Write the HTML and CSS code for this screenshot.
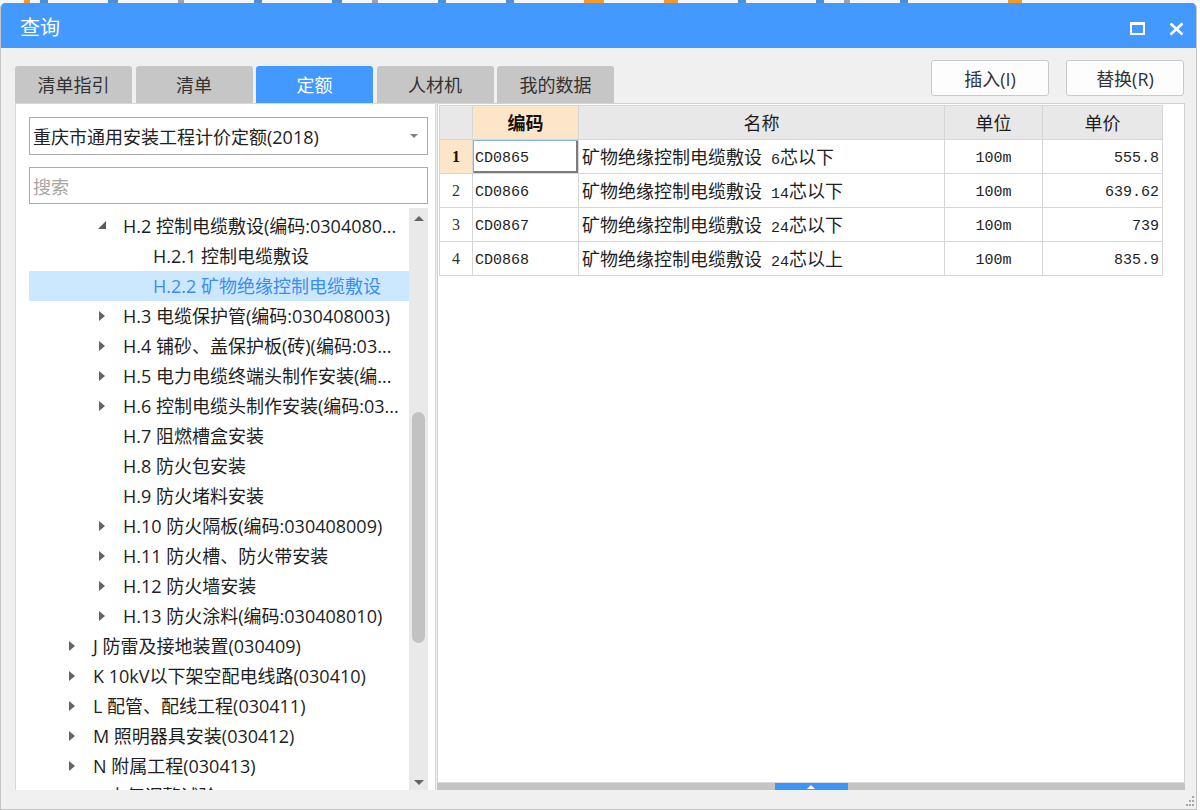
FILE: index.html
```html
<!DOCTYPE html>
<html lang="zh-CN">
<head>
<meta charset="utf-8">
<title>查询</title>
<link rel="stylesheet" href="styles.css">
</head>
<body>
<div class="backdrop">
  <span class="bit b-orange w6 m24"></span><span class="bit b-blue w8 m10"></span><span class="bit b-blue w10 m60"></span><span class="bit b-gray w6 m60"></span><span class="bit b-blue w8 m70"></span><span class="bit b-blue w10 m70"></span><span class="bit b-gray w6 m30"></span><span class="bit b-blue w8 m60"></span><span class="bit b-blue w8 m60"></span><span class="bit b-orange w20 m70"></span><span class="bit b-orange w14 m60"></span><span class="bit b-blue w8 m60"></span><span class="bit b-blue w8 m70"></span><span class="bit b-gray w6 m20"></span><span class="bit b-blue w8 m50"></span><span class="bit b-orange w14 m100"></span>
</div>
<div class="window">
  <div class="titlebar">
    <span class="title">查询</span>
    <div class="win-controls">
      <svg class="win-btn" width="15" height="13" viewBox="0 0 15 13"><rect x="1" y="1.5" width="13" height="10.5" fill="none" stroke="#fff" stroke-width="2"/><rect x="0" y="0" width="15" height="3" fill="#fff"/></svg>
      <svg class="win-btn" width="15" height="14" viewBox="0 0 15 14"><path d="M1.5 1.5L13.5 12.5M13.5 1.5L1.5 12.5" stroke="#fff" stroke-width="2.6" fill="none"/></svg>
    </div>
  </div>
  <div class="content">
    <div class="toolbar">
      <div class="tabs">
        <div class="tab">清单指引</div>
        <div class="tab">清单</div>
        <div class="tab active">定额</div>
        <div class="tab">人材机</div>
        <div class="tab">我的数据</div>
      </div>
      <div class="actions">
        <button class="btn">插入(I)</button>
        <button class="btn">替换(R)</button>
      </div>
    </div>
    <div class="main">
      <div class="left-panel">
        <div class="select">重庆市通用安装工程计价定额(2018)<span class="caret"></span></div>
        <div class="search">搜索</div>
        <div class="tree-wrap">
          <ul class="tree">
            <li class="node lvl2"><span class="arrow open"></span>H.2 控制电缆敷设(编码:0304080...</li>
            <li class="node lvl3"><span class="arrow none"></span>H.2.1 控制电缆敷设</li>
            <li class="node lvl3 selected"><span class="arrow none"></span>H.2.2 矿物绝缘控制电缆敷设</li>
            <li class="node lvl2"><span class="arrow closed"></span>H.3 电缆保护管(编码:030408003)</li>
            <li class="node lvl2"><span class="arrow closed"></span>H.4 铺砂、盖保护板(砖)(编码:03...</li>
            <li class="node lvl2"><span class="arrow closed"></span>H.5 电力电缆终端头制作安装(编...</li>
            <li class="node lvl2"><span class="arrow closed"></span>H.6 控制电缆头制作安装(编码:03...</li>
            <li class="node lvl2"><span class="arrow none"></span>H.7 阻燃槽盒安装</li>
            <li class="node lvl2"><span class="arrow none"></span>H.8 防火包安装</li>
            <li class="node lvl2"><span class="arrow none"></span>H.9 防火堵料安装</li>
            <li class="node lvl2"><span class="arrow closed"></span>H.10 防火隔板(编码:030408009)</li>
            <li class="node lvl2"><span class="arrow closed"></span>H.11 防火槽、防火带安装</li>
            <li class="node lvl2"><span class="arrow closed"></span>H.12 防火墙安装</li>
            <li class="node lvl2"><span class="arrow closed"></span>H.13 防火涂料(编码:030408010)</li>
            <li class="node lvl1"><span class="arrow closed"></span>J 防雷及接地装置(030409)</li>
            <li class="node lvl1"><span class="arrow closed"></span>K 10kV以下架空配电线路(030410)</li>
            <li class="node lvl1"><span class="arrow closed"></span>L 配管、配线工程(030411)</li>
            <li class="node lvl1"><span class="arrow closed"></span>M 照明器具安装(030412)</li>
            <li class="node lvl1"><span class="arrow closed"></span>N 附属工程(030413)</li>
            <li class="node lvl1"><span class="arrow closed"></span>P 电气调整试验(030414)</li>
          </ul>
          <div class="vscroll">
            <div class="vs-btn"><span class="tri-up"></span></div>
            <div class="vs-thumb"></div>
            <div class="vs-fill"></div>
            <div class="vs-btn bottom"><span class="tri-down"></span></div>
          </div>
        </div>
      </div>
      <div class="right-col">
        <div class="grid-panel">
          <table class="grid">
            <colgroup>
              <col class="c-no"><col class="c-code"><col class="c-name"><col class="c-unit"><col class="c-price">
            </colgroup>
            <thead>
              <tr><th></th><th class="cur">编码</th><th>名称</th><th>单位</th><th>单价</th></tr>
            </thead>
            <tbody>
              <tr><td class="no cur">1</td><td class="code focus">CD0865</td><td class="name">矿物绝缘控制电缆敷设<span class="mono"> 6</span>芯以下</td><td class="unit">100m</td><td class="price">555.8</td></tr>
              <tr><td class="no">2</td><td class="code">CD0866</td><td class="name">矿物绝缘控制电缆敷设<span class="mono"> 14</span>芯以下</td><td class="unit">100m</td><td class="price">639.62</td></tr>
              <tr><td class="no">3</td><td class="code">CD0867</td><td class="name">矿物绝缘控制电缆敷设<span class="mono"> 24</span>芯以下</td><td class="unit">100m</td><td class="price">739</td></tr>
              <tr><td class="no">4</td><td class="code">CD0868</td><td class="name">矿物绝缘控制电缆敷设<span class="mono"> 24</span>芯以上</td><td class="unit">100m</td><td class="price">835.9</td></tr>
            </tbody>
          </table>
        </div>
        <div class="splitter"><div class="split-handle"><span class="tri-up white"></span></div></div>
      </div>
    </div>
    <div class="status">
      <svg class="grip" width="8" height="11" viewBox="0 0 8 11"><g fill="#a8a8a8"><rect x="6" y="0" width="2" height="2"/><rect x="3" y="4" width="2" height="2"/><rect x="6" y="4" width="2" height="2"/><rect x="0" y="8" width="2" height="2"/><rect x="3" y="8" width="2" height="2"/><rect x="6" y="8" width="2" height="2"/></g></svg>
    </div>
  </div>
</div>
</body>
</html>
```

FILE: styles.css
```css
* { box-sizing: border-box; }
html, body { margin: 0; padding: 0; }
body {
  width: 1200px;
  height: 810px;
  overflow: hidden;
  background: #ffffff;
  font-family: "Open Sans", "Noto Sans CJK SC", sans-serif;
  color: #222;
}

/* strip of the desktop visible above the dialog */
.backdrop { height: 3px; display: flex; background: #f4f6f8; }
.bit { height: 3px; display: block; }
.b-orange { background: #f39a2b; }
.b-blue { background: #4f8fd8; }
.b-gray { background: #9aa4b0; }
.w6 { width: 6px; } .w8 { width: 8px; } .w10 { width: 10px; } .w14 { width: 14px; } .w20 { width: 20px; }
.m10 { margin-left: 10px; } .m20 { margin-left: 20px; } .m24 { margin-left: 24px; } .m30 { margin-left: 30px; }
.m50 { margin-left: 50px; } .m60 { margin-left: 60px; } .m70 { margin-left: 70px; } .m100 { margin-left: 100px; }

.window {
  width: 1197px;
  height: 807px;
  display: flex;
  flex-direction: column;
  background: #f0f0f0;
  border-left: 1px solid #c4c4c4;
  border-right: 1px solid #c4c4c4;
  border-bottom: 1px solid #c4c4c4;
  border-radius: 5px 5px 0 0;
  overflow: hidden;
}

.titlebar {
  height: 45px;
  flex: none;
  background: #4499fe;
  display: flex;
  align-items: center;
  padding: 0 12px 0 19px;
}
.title {
  font-family: "Noto Sans CJK SC", sans-serif;
  font-size: 20px;
  color: #fff;
  line-height: 1;
  margin-top: 3px;
}
.win-controls {
  margin-left: auto;
  display: flex;
  align-items: center;
  gap: 24px;
  margin-top: 6px;
}
.win-btn { display: block; }

.content {
  flex: 1;
  display: flex;
  flex-direction: column;
  padding: 12px 11px 0 14px;
  min-height: 0;
}

.toolbar {
  height: 43px;
  flex: none;
  display: flex;
  justify-content: space-between;
}
.tabs {
  align-self: flex-end;
  display: flex;
  gap: 3.5px;
}
.tab {
  width: 117px;
  height: 37px;
  background: #c6c6c6;
  border-radius: 3px 3px 0 0;
  display: flex;
  align-items: center;
  justify-content: center;
  font-size: 18px;
  color: #333;
  padding-bottom: 2px;
}
.tab.active { background: #4399fd; color: #fff; }

.actions { display: flex; gap: 17px; align-self: flex-start; margin-right: 1px; }
.btn {
  width: 118px;
  height: 36px;
  border: 1px solid #c9c9c9;
  border-radius: 3px;
  background: #fdfdfd;
  font-family: "Open Sans", "Noto Sans CJK SC", sans-serif;
  font-size: 18px;
  color: #333;
  padding: 0;
}

.main {
  height: 687px;
  flex: none;
  display: flex;
  gap: 1px;
}

/* left panel */
.left-panel {
  width: 421px;
  background: #fff;
  border: 1px solid #d8d8d8;
  border-bottom: none;
  padding: 13px 7px 0 13px;
  display: flex;
  flex-direction: column;
  min-height: 0;
}
.select, .search {
  height: 38px;
  flex: none;
  border: 1px solid #ababab;
  display: flex;
  align-items: center;
  padding-left: 3px;
  font-size: 18px;
  white-space: nowrap;
}
.select { color: #222; }
.caret {
  margin-left: auto;
  margin-right: 9px;
  width: 0;
  height: 0;
  border-left: 4px solid transparent;
  border-right: 4px solid transparent;
  border-top: 4px solid #808080;
}
.search { margin-top: 12px; height: 37px; color: #a6a6a6; }

.tree-wrap {
  margin-top: 4px;
  flex: 1;
  min-height: 0;
  display: flex;
}
.tree {
  list-style: none;
  margin: 0;
  padding: 3px 0 0 0;
  flex: 1;
  min-width: 0;
  overflow: hidden;
}
.node {
  height: 30px;
  display: flex;
  align-items: center;
  white-space: nowrap;
  overflow: hidden;
  font-size: 18px;
  color: #1e1e1e;
  padding-bottom: 3px;
}
.node.lvl1 { padding-left: 39px; }
.node.lvl2 { padding-left: 69px; }
.node.lvl3 { padding-left: 99px; }
.node.selected { background: #cce8ff; color: #3d8cf0; }
.arrow {
  flex: none;
  width: 25px;
  height: 12px;
  position: relative;
  top: 1px;
}
.arrow.closed::before {
  content: "";
  position: absolute;
  left: 1px;
  top: 1px;
  border-top: 5px solid transparent;
  border-bottom: 5px solid transparent;
  border-left: 6px solid #636363;
}
.arrow.open::before {
  content: "";
  position: absolute;
  left: 0;
  top: 1px;
  border-left: 8px solid transparent;
  border-bottom: 8px solid #5a5a5a;
}

.vscroll {
  width: 19px;
  flex: none;
  background: #e9e9e9;
  display: flex;
  flex-direction: column;
  align-items: center;
}
.vs-btn {
  height: 20px;
  width: 100%;
  flex: none;
  display: flex;
  align-items: center;
  justify-content: center;
}
.vs-btn.bottom { height: 16px; }
.tri-up {
  width: 0; height: 0;
  border-left: 5px solid transparent;
  border-right: 5px solid transparent;
  border-bottom: 5px solid #646464;
}
.tri-down {
  width: 0; height: 0;
  border-left: 5px solid transparent;
  border-right: 5px solid transparent;
  border-top: 5px solid #646464;
}
.vs-thumb {
  width: 13px;
  height: 231px;
  margin-top: 184px;
  flex: none;
  border-radius: 7px;
  background: #c2c2c2;
}
.vs-fill { flex: 1; }

/* right side */
.right-col {
  width: 748px;
  display: flex;
  flex-direction: column;
}
.grid-panel {
  flex: 1;
  background: #fff;
  border: 1px solid #d2d2d2;
  border-bottom: none;
  padding: 1px 0 0 1px;
}
.grid {
  border-collapse: collapse;
  table-layout: fixed;
  width: 723px;
  font-family: "Open Sans", "Noto Sans CJK SC", sans-serif;
  font-size: 18px;
  color: #1e1e1e;
}
.c-no { width: 33px; }
.c-code { width: 106px; }
.c-name { width: 366px; }
.c-unit { width: 98px; }
.c-price { width: 120px; }
.grid th, .grid td {
  border: 1px solid #d6d6d6;
  padding: 0;
  white-space: nowrap;
  overflow: hidden;
}
.grid th {
  height: 34px;
  background: #e8e8e8;
  font-weight: normal;
  text-align: center;
  padding-bottom: 2px;
}
.grid th.cur { background: #fde5c9; font-weight: bold; color: #111; }
.grid td { height: 34px; padding-bottom: 1px; }
.grid td.no {
  text-align: center;
  font-family: "Liberation Serif", serif;
  font-size: 16px;
  color: #333;
  padding-top: 2px;
}
.grid td.no.cur { background: #fde5c9; font-weight: bold; color: #111; }
.grid td.code, .grid td.unit, .grid td.price, .mono {
  font-family: "Liberation Mono", monospace;
  font-size: 15px;
}
.grid td.code, .grid td.unit, .grid td.price { padding-top: 3px; padding-bottom: 0; }
.mono { position: relative; top: 0; }
.grid td.code { padding-left: 2px; }
.grid td.code.focus {
  box-shadow: inset 1px 1px 0 #7fb3ec, inset -2px -2px 0 #7c7c7c;
}
.grid td.name { padding-left: 3px; }
.grid td.unit { text-align: center; }
.grid td.price { text-align: right; padding-right: 3px; }

.splitter {
  height: 8px;
  flex: none;
  background: #c4c4c4;
  border-top: 1px solid #d9d9d9;
  display: flex;
  justify-content: center;
}
.split-handle {
  width: 73px;
  background: #3d95fb;
  display: flex;
  align-items: center;
  justify-content: center;
}
.tri-up.white {
  border-left-width: 4px;
  border-right-width: 4px;
  border-bottom: 4px solid #fff;
}

.status {
  flex: 1;
  display: flex;
  justify-content: flex-end;
  align-items: flex-end;
  padding: 0 0 2px 0;
  margin-right: -11px;
}
.grip { display: block; margin-right: 2px; }
```
